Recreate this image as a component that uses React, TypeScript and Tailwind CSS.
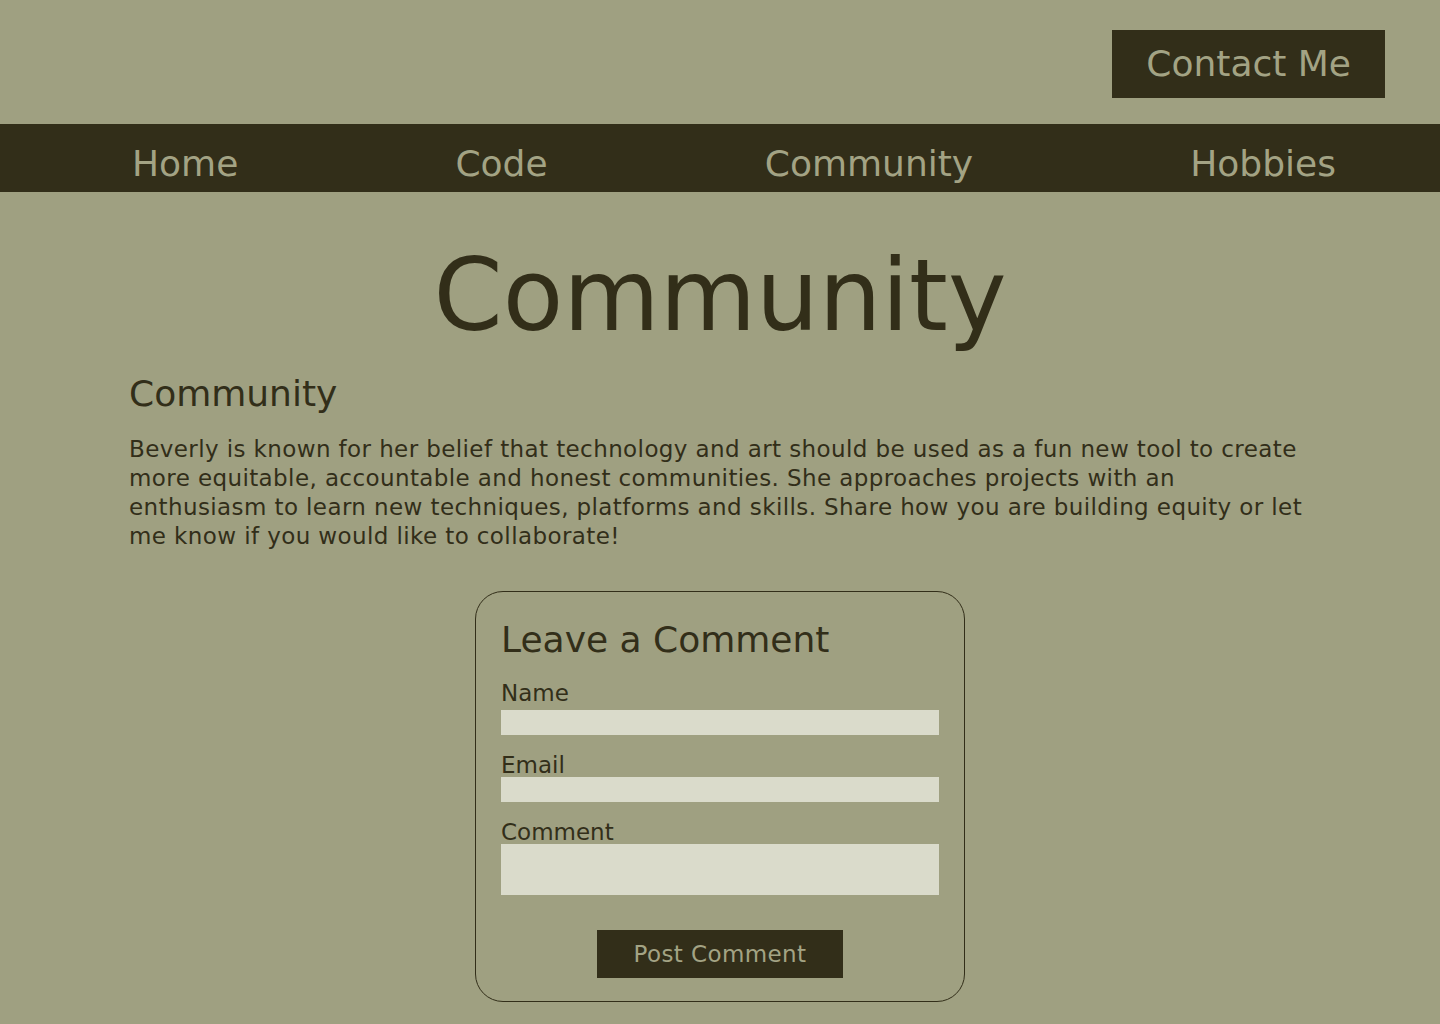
const font = { fontFamily: '"DejaVu Sans", "Noto Sans", sans-serif' }

const navItems = ['Home', 'Code', 'Community', 'Hobbies']

export default function App() {
  return (
    <div
      className="min-h-screen bg-[#9fa081] text-[#322e19]"
      style={font}
    >
      <header className="h-[124px] flex justify-end items-start pt-[30px] pr-[55px]">
        <button className="h-[68px] px-[34px] bg-[#322e19] text-[#a3a384] text-[36px] leading-none">
          Contact Me
        </button>
      </header>

      <nav className="h-[68px] bg-[#322e19] flex items-center justify-between pl-[132px] pr-[104px] pt-[12px]">
        {navItems.map(item => (
          <a key={item} className="text-[36px] leading-none text-[#a3a384]">
            {item}
          </a>
        ))}
      </nav>

      <main className="px-[129px]">
        <h1 className="mt-[54px] text-center text-[99px] leading-none">
          Community
        </h1>
        <h2 className="mt-[31px] text-[36px] leading-none">Community</h2>
        <p className="mt-[23px] text-[23px] leading-[29px] tracking-[0.4px]">
          Beverly is known for her belief that technology and art should be used
          as a fun new tool to create more equitable, accountable and honest
          communities. She approaches projects with an enthusiasm to learn new
          techniques, platforms and skills. Share how you are building equity or
          let me know if you would like to collaborate!
        </p>

        <form className="mx-auto mt-[40px] w-[490px] border border-[#322e19] rounded-[28px] px-[25px] pt-[30px] pb-[23px] flex flex-col">
          <h3 className="text-[36px] leading-none">Leave a Comment</h3>

          <label className="mt-[24px] text-[23px] leading-none">Name</label>
          <input className="mt-[5px] h-[25px] w-full bg-[#dadbcb] outline-none" />

          <label className="mt-[19px] text-[23px] leading-none">Email</label>
          <input className="h-[25px] w-full bg-[#dadbcb] outline-none" />

          <label className="mt-[19px] text-[23px] leading-none">Comment</label>
          <textarea className="h-[51px] w-full bg-[#dadbcb] outline-none resize-none" />

          <button
            type="button"
            className="mt-[35px] self-center h-[48px] px-[37px] bg-[#322e19] text-[#a3a384] text-[23px] leading-none tracking-[0.4px]"
          >
            Post Comment
          </button>
        </form>
      </main>
    </div>
  )
}
